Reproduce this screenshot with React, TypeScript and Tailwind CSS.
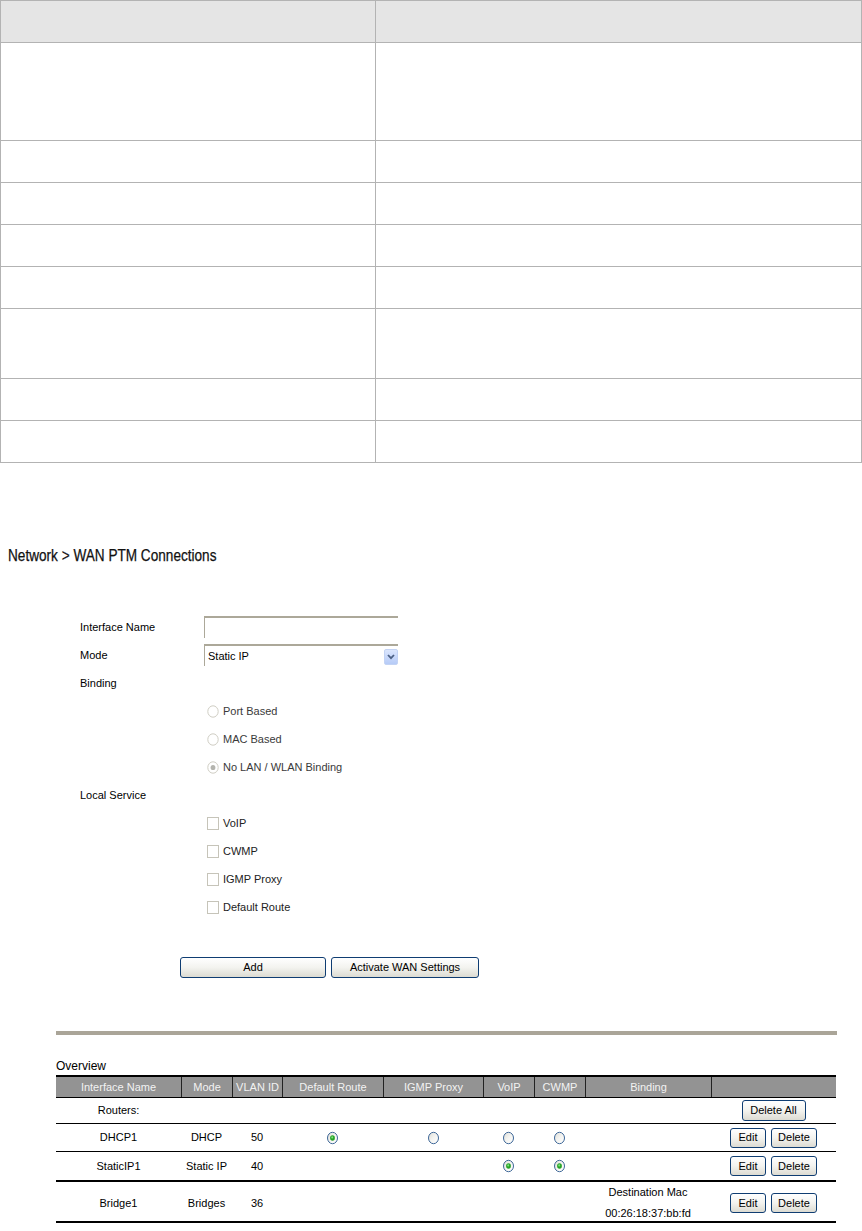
import React from "react";

const font = "font-['Liberation_Sans',Arial,sans-serif]";

function TableRadio({ checked }: { checked?: boolean }) {
  return (
    <svg width="13" height="14" viewBox="0 0 13 14" className="inline-block">
      <defs>
        <linearGradient id={checked ? "rgc" : "rgu"} x1="0" y1="0" x2="1" y2="1">
          <stop offset="0" stopColor="#dcdcd6" />
          <stop offset="0.5" stopColor="#f4f4f1" />
          <stop offset="1" stopColor="#ffffff" />
        </linearGradient>
      </defs>
      <ellipse cx="6.5" cy="7" rx="5" ry="5.7" fill={`url(#${checked ? "rgc" : "rgu"})`} stroke="#3f6899" strokeWidth="1" />
      {checked && (
        <>
          <ellipse cx="6.5" cy="7" rx="2.4" ry="2.7" fill="#27a327" />
          <ellipse cx="6.2" cy="6.4" rx="1" ry="1.1" fill="#7be27b" />
        </>
      )}
    </svg>
  );
}

function FormRadio({ checked }: { checked?: boolean }) {
  return (
    <svg width="12" height="13" viewBox="0 0 12 13" className="block">
      <ellipse cx="6" cy="6.5" rx="5.2" ry="5.7" fill="#ffffff" stroke="#cfcdc3" strokeWidth="1" />
      {checked && <ellipse cx="6" cy="6.5" rx="2.4" ry="2.6" fill="#b4b4ae" />}
    </svg>
  );
}

function XPButton({ label, className }: { label: string; className: string }) {
  return (
    <div
      className={`flex items-center justify-center rounded-[3px] border border-[#0f3d72] bg-gradient-to-b from-[#ffffff] via-[#f3f3ef] to-[#dcdbd2] text-[11px] text-black leading-none ${className}`}
    >
      {label}
    </div>
  );
}

const cols = "grid grid-cols-[125px_51px_50px_101px_100px_51px_51px_126px_125px]";

export default function App() {
  const topRows = [42, 98, 42, 42, 42, 42, 70, 42, 42];
  return (
    <div className={`w-[862px] min-h-[1231px] bg-white ${font} text-black`}>
      {/* Top empty table */}
      <div className="w-[862px] border-l border-t border-[#b3b3b3]">
        {topRows.map((h, i) => (
          <div key={i} className="flex" style={{ height: h }}>
            <div className={`w-[375px] border-r border-b border-[#b3b3b3] ${i === 0 ? "bg-[#e5e5e5]" : ""}`} />
            <div className={`w-[486px] border-r border-b border-[#b3b3b3] ${i === 0 ? "bg-[#e5e5e5]" : ""}`} />
          </div>
        ))}
      </div>

      {/* Title */}
      <div className="mt-[83px] pl-[8px] h-[20px] text-[16px] leading-[20px] text-[#111]">
        <span className="inline-block origin-left scale-x-[0.85] whitespace-nowrap [-webkit-text-stroke:0.25px_#111]">Network &gt; WAN PTM Connections</span>
      </div>

      {/* Form */}
      <div className="mt-[47px] pl-[80px] text-[11px]">
        <div className="flex h-[28px] items-center">
          <div className="w-[124px]">Interface Name</div>
          <div className="w-[194px] h-[22px] border-t-2 border-l border-[#aca899] bg-white" />
        </div>
        <div className="flex h-[28px] items-center">
          <div className="w-[124px]">Mode</div>
          <div className="w-[194px] h-[22px] border-t-2 border-l border-[#aca899] bg-white flex items-center justify-between pl-[3px]">
            <span>Static IP</span>
            <div className="w-[14px] h-[16px] mt-[1px] rounded-[2px] bg-gradient-to-b from-[#dbe6fd] to-[#b6cbf7] border border-[#c3d3f4] flex items-center justify-center">
              <svg width="8" height="6" viewBox="0 0 8 6">
                <path d="M1 1 L4 4.2 L7 1" fill="none" stroke="#4d6185" strokeWidth="1.8" />
              </svg>
            </div>
          </div>
        </div>
        <div className="flex h-[28px] items-center">
          <div className="w-[124px]">Binding</div>
        </div>
        {["Port Based", "MAC Based", "No LAN / WLAN Binding"].map((t, i) => (
          <div key={t} className="flex h-[28px] items-center">
            <div className="w-[127px]" />
            <FormRadio checked={i === 2} />
            <span className="ml-[4px] text-[#3a3a3a]">{t}</span>
          </div>
        ))}
        <div className="flex h-[28px] items-center">
          <div className="w-[124px]">Local Service</div>
        </div>
        {["VoIP", "CWMP", "IGMP Proxy", "Default Route"].map((t) => (
          <div key={t} className="flex h-[28px] items-center">
            <div className="w-[127px]" />
            <div className="w-[12px] h-[13px] border border-[#c6c4b9] bg-white" />
            <span className="ml-[4px] text-[#222]">{t}</span>
          </div>
        ))}
      </div>

      {/* Buttons */}
      <div className="mt-[36px] pl-[180px] flex gap-[5px]">
        <XPButton label="Add" className="w-[146px] h-[21px]" />
        <XPButton label="Activate WAN Settings" className="w-[148px] h-[21px]" />
      </div>

      {/* Separator */}
      <div className="mt-[53px] ml-[56px] w-[781px] h-[4px] bg-[#aaa598]" />

      {/* Overview */}
      <div className="mt-[23px] pl-[56px] text-[12px] leading-[16px]">Overview</div>

      <div className="mt-[1px] ml-[56px] w-[780px] text-[11px]">
        <div className={`${cols} h-[23px] border-t-2 border-b border-black bg-[#939393] text-[#f2f2f2]`}>
          {["Interface Name", "Mode", "VLAN ID", "Default Route", "IGMP Proxy", "VoIP", "CWMP", "Binding", ""].map(
            (h, i) => (
              <div key={i} className={`flex items-center justify-center whitespace-nowrap ${i > 0 ? "border-l border-[#222]" : ""}`}>
                {h}
              </div>
            )
          )}
        </div>

        {/* Routers */}
        <div className={`${cols} h-[26px] border-b border-black`}>
          <div className="flex items-center justify-center">Routers:</div>
          <div />
          <div />
          <div />
          <div />
          <div />
          <div />
          <div />
          <div className="flex items-center justify-center">
            <XPButton label="Delete All" className="w-[64px] h-[21px]" />
          </div>
        </div>

        {/* DHCP1 */}
        <div className={`${cols} h-[28px] border-b border-black`}>
          <div className="flex items-center justify-center">DHCP1</div>
          <div className="flex items-center justify-center">DHCP</div>
          <div className="flex items-center justify-center">50</div>
          <div className="flex items-center justify-center"><TableRadio checked /></div>
          <div className="flex items-center justify-center"><TableRadio /></div>
          <div className="flex items-center justify-center"><TableRadio /></div>
          <div className="flex items-center justify-center"><TableRadio /></div>
          <div />
          <div className="flex items-center justify-center gap-[5px]">
            <XPButton label="Edit" className="w-[36px] h-[20px]" />
            <XPButton label="Delete" className="w-[46px] h-[20px]" />
          </div>
        </div>

        {/* StaticIP1 */}
        <div className={`${cols} h-[30px] border-b-2 border-black`}>
          <div className="flex items-center justify-center">StaticIP1</div>
          <div className="flex items-center justify-center">Static IP</div>
          <div className="flex items-center justify-center">40</div>
          <div />
          <div />
          <div className="flex items-center justify-center"><TableRadio checked /></div>
          <div className="flex items-center justify-center"><TableRadio checked /></div>
          <div />
          <div className="flex items-center justify-center gap-[5px]">
            <XPButton label="Edit" className="w-[36px] h-[20px]" />
            <XPButton label="Delete" className="w-[46px] h-[20px]" />
          </div>
        </div>

        {/* Bridge1 */}
        <div className={`${cols} h-[41px] border-b-2 border-black`}>
          <div className="flex items-center justify-center">Bridge1</div>
          <div className="flex items-center justify-center">Bridges</div>
          <div className="flex items-center justify-center">36</div>
          <div />
          <div />
          <div />
          <div />
          <div className="flex flex-col items-center justify-center leading-[21px] whitespace-nowrap">
            <span>Destination Mac</span>
            <span>00:26:18:37:bb:fd</span>
          </div>
          <div className="flex items-center justify-center gap-[5px]">
            <XPButton label="Edit" className="w-[36px] h-[20px]" />
            <XPButton label="Delete" className="w-[46px] h-[20px]" />
          </div>
        </div>
      </div>
    </div>
  );
}
